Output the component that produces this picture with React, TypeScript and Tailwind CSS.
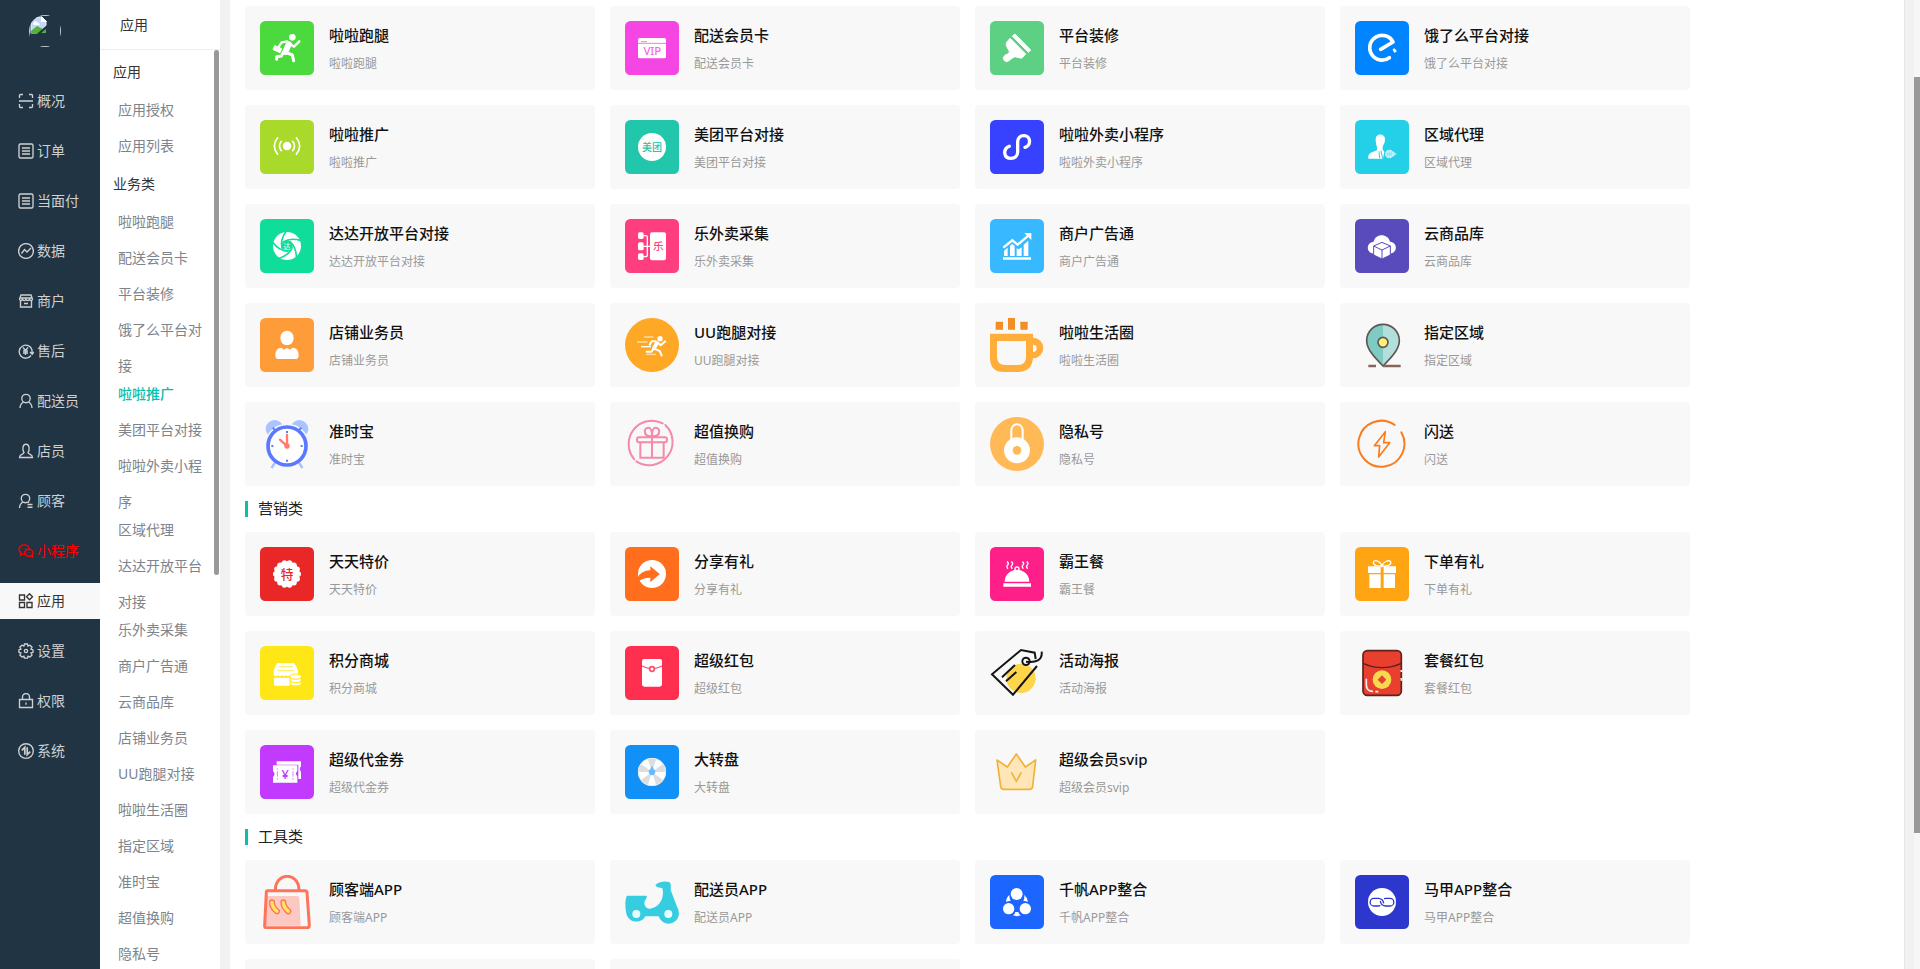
import React from 'react'

const navIcons: Record<string, React.ReactNode> = {
  scan: <path d="M1.500 5V2.500a1 1 0 0 1 1-1H5M11 1.500h2.500a1 1 0 0 1 1 1V5M14.500 11v2.500a1 1 0 0 1-1 1H11M5 14.500H2.500a1 1 0 0 1-1-1V11M1 8h14" />,
  list: <path d="M2.500 1h11a1.500 1.500 0 0 1 1.500 1.500v11a1.500 1.500 0 0 1-1.500 1.500h-11A1.500 1.500 0 0 1 1 13.500v-11A1.500 1.500 0 0 1 2.500 1ZM4 5h8M4 8h8M4 11h8" />,
  trend: <><circle cx="8" cy="8" r="7.400" /><path d="M3.500 10.500 6.500 6.500 9 9l4-4" /></>,
  shop: <path d="M3 2h10l1.500 4c0 2-2.500 2-3 .3C11 8 8.500 8 8 6.300 7.500 8 5 8 4.500 6.300 4 8 1.500 8 1.500 6L3 2ZM2.500 8v6h11V8M6 10.500h4M2 5h12" />,
  refund: <><path d="M13 12.500A6.500 6.500 0 1 1 14 7v4M12 9l2.200 2.200L16 9" /><path d="M5 4.500 7.500 7.500l2.500-3M7.500 7.500V12M5 8h5M5 10h5" /></>,
  rider: <><circle cx="8" cy="5.500" r="4.200" /><path d="M2 15c.2-3 1.600-5 3.600-6M14 15c-.2-3-1.600-5-3.600-6" /></>,
  clerk: <path d="M6 9.500C4.500 8 4 1.200 8 1.200S11.500 8 10 9.500c0 2 4.500 1.500 4.500 5h-13c0-3.500 4.500-3 4.500-5Z" />,
  customer: <><circle cx="7.500" cy="5.500" r="4.200" /><path d="M1.500 15c.2-3 1.500-5 3.500-6M10 9l1 .6M9.500 11.500h5M9.500 14.200h5" /></>,
  wechat: <><path d="M8.500 11.200c-1 .3-2.600.2-3.500-.2l-2.500 1.200.5-2.200C-.8 6.800 1.500 1.800 6 1.800c3 0 5 2 5 4.200" /><ellipse cx="10.800" cy="9.800" rx="4.200" ry="3.600" /><path d="m12.500 13 2 1-.3-2M4.200 5v.5M7.700 5v.5M9.500 9v.5M12.200 9v.5" /></>,
  apps: <path d="M1.500 2h5v5h-5zM1.500 9.500h5v5h-5zM9 9.500h5v5H9zM11.500.8l3 3-3 3-3-3z" />,
  gear: <><path d="M6.500 1h3l.5 2 2-.8 2 2-1 1.900 2 .8v2.400l-2 .7 1 2-2 2-2-.9-.6 2H6.500l-.6-2-2 .9-2-2 1-2-2-.7V6.900l2-.8-1-1.900 2-2 2 .8z" /><circle cx="8" cy="8" r="1.600" /></>,
  lock: <path d="M1.500 6.500h13v8h-13zM4.500 6.500V4a3.500 3.500 0 0 1 7 0v2.500M8 9.500v2.200" />,
  system: <><circle cx="8" cy="8" r="7.300" /><path d="M3.800 7.300 6.800 4.300v7.500M9.200 4.200v7.500l3-3" strokeWidth="1.700" /></>,
}

const navItems = [
  { icon: 'scan', label: '概况' },
  { icon: 'list', label: '订单' },
  { icon: 'list', label: '当面付' },
  { icon: 'trend', label: '数据' },
  { icon: 'shop', label: '商户' },
  { icon: 'refund', label: '售后' },
  { icon: 'rider', label: '配送员' },
  { icon: 'clerk', label: '店员' },
  { icon: 'customer', label: '顾客' },
  { icon: 'wechat', label: '小程序', className: 'text-[#ff0000]' },
  { icon: 'apps', label: '应用', className: 'bg-[#f8f8f8] text-[#333]' },
  { icon: 'gear', label: '设置' },
  { icon: 'lock', label: '权限' },
  { icon: 'system', label: '系统' },
]

const menuGroups = [
  { title: '应用', items: ['应用授权', '应用列表'] },
  {
    title: '业务类',
    items: [
      '啦啦跑腿', '配送会员卡', '平台装修', '饿了么平台对接', '啦啦推广', '美团平台对接', '啦啦外卖小程序',
      '区域代理', '达达开放平台对接', '乐外卖采集', '商户广告通', '云商品库', '店铺业务员', 'UU跑腿对接',
      '啦啦生活圈', '指定区域', '准时宝', '超值换购', '隐私号',
    ],
  },
]

const IconText = ({ x, y, size, fill, children }: { x: number; y: number; size: number; fill: string; children: string }) => (
  <text x={x} y={y} fontSize={size} fill={fill} textAnchor="middle" fontWeight="500">{children}</text>
)

const angles = (n: number) => Array.from({ length: n }, (_, i) => (i * 2 * Math.PI) / n)

// every drawing uses a 162 x 162 box, bg is the rounded tile behind it
const appIcons: Record<string, { bg?: string; art: React.ReactNode }> = {
  run: {
    bg: '#4cd93d',
    art: (
      <g stroke="#fff" fill="none" strokeLinecap="round" strokeLinejoin="round">
        <circle cx="97" cy="49" r="10" fill="#fff" stroke="none" />
        <path d="m86 70-10 23" strokeWidth="18" />
        <path d="m90 69 12 8 16-16M82 61l-17 3-10 15" strokeWidth="7" />
        <path d="m78 94 19 8 4 17M70 94l-6 11-14 2v8" strokeWidth="9" />
        <path d="m45 74 20 9-5 12-20-9z" fill="#fff" strokeWidth="3" />
      </g>
    ),
  },
  vip: {
    bg: '#f545e2',
    art: (
      <>
        <rect x="39" y="51" width="84" height="61" rx="5" fill="#fff" />
        <path d="M39 67h84M48 62h18" stroke="#f57ae9" strokeWidth="3" />
        <IconText x={82} y={102} size={34} fill="#f56ae8">VIP</IconText>
      </>
    ),
  },
  brush: {
    bg: '#5dd083',
    art: (
      <g fill="#fff" stroke="#fff" strokeWidth="3" strokeLinejoin="round">
        <path d="m67 45 8-6 47 48-7 7z" />
        <path d="m60 52 47 47-12 13-20-5q-10 3-16 11-10 8-17 0-6-9 4-16 14-3 12-11L49 74v-9z" />
      </g>
    ),
  },
  eleme: {
    bg: '#0084ff',
    art: (
      <g stroke="#fff" strokeWidth="11" fill="none" strokeLinecap="round" strokeLinejoin="round">
        <path d="m77 85 37-22A37 37 0 1 0 103 110" />
        <path d="m117 85-1 1 3 6 3-2z" strokeWidth="6" fill="#fff" />
      </g>
    ),
  },
  signal: {
    bg: '#a9d92b',
    art: (
      <g stroke="#fff" strokeWidth="5" fill="none">
        <circle cx="81" cy="78" r="13" fill="#fff" stroke="none" />
        <path d="M65 62q-13 16 0 32M54 52q-22 26 0 52M97 62q13 16 0 32M108 52q22 26 0 52" />
      </g>
    ),
  },
  meituan: {
    bg: '#22c6aa',
    art: (
      <>
        <circle cx="81" cy="81" r="42" fill="#fff" />
        <IconText x={81} y={92} size={30} fill="#22c6aa">美团</IconText>
      </>
    ),
  },
  mini: {
    bg: '#3642ff',
    art: <path d="M105 82c20-7 17-35-3-35-12 0-19 8-19 19v30c0 12-9 19-20 19-22 0-26-27-5-36" fill="none" stroke="#fff" strokeWidth="10" strokeLinecap="round" />,
  },
  agent: {
    bg: '#24cfe8',
    art: (
      <g fill="#fff">
        <path d="M62 57c0-18 28-18 28 0 0 13-5 18-7 23v9l5 6-4 21H40c-1-15 4-17 26-25v-9c-2-7-4-14-4-25Z" />
        <path d="m78 92 5 24M72 94l2 20" stroke="#24cfe8" strokeWidth="3" />
        <circle cx="103" cy="102" r="13" fillOpacity=".75" />
        <path d="m113 93 12 9-12 9z" fillOpacity=".6" />
        <path d="M90 102h26M103 90v25M95 94q8 7 0 16M111 94q-8 7 0 16" stroke="#24cfe8" strokeWidth="1" fill="none" />
      </g>
    ),
  },
  dada: {
    bg: '#11dd9b',
    art: (
      <>
        <circle cx="81" cy="81" r="42" fill="#fff" />
        {[0, 72, 144, 216, 288].map((deg) => (
          <path key={deg} d="M70 69q22-14 53-4" transform={`rotate(${deg} 81 81)`} fill="none" stroke="#11dd9b" strokeWidth="5" />
        ))}
        <circle cx="81" cy="81" r="17" fill="#11dd9b" />
        <IconText x={81} y={89} size={21} fill="#dffaf0">达</IconText>
      </>
    ),
  },
  collect: {
    bg: '#ff3e7f',
    art: (
      <>
        <g fill="#fff">
          <rect x="75" y="40" width="48" height="84" rx="6" />
          <rect x="39" y="40" width="17" height="20" rx="5" />
          <rect x="39" y="70" width="17" height="24" rx="5" />
          <rect x="39" y="103" width="17" height="20" rx="5" />
        </g>
        <path d="M56 50h7q4 0 4 5v52q0 6-5 6h-6M56 82h20" fill="none" stroke="#fff" strokeWidth="4" />
        <IconText x={100} y={93} size={32} fill="#ff3e7f">乐</IconText>
      </>
    ),
  },
  chart: {
    bg: '#38b9ff',
    art: (
      <g fill="#fff">
        <path d="M39 115h84v7H39zM42 95l11-9v25H42zM60 80l7-5 7 6v30H60zM80 88l6 3 9-6v26H80zM101 77l14-12v46h-14zM103 42h21v21z" />
        <path d="m40 86 27-22 16 13 32-27" fill="none" stroke="#fff" strokeWidth="7" />
      </g>
    ),
  },
  cloud: {
    bg: '#5a4bbd',
    art: (
      <>
        <path d="M60 104c-28 0-28-34-4-36 4-26 44-26 49 0 24 2 24 36-3 36z" fill="#fff" />
        <path d="m81 70 25 11v27l-25 12-25-12V81zM56 81l25 12 25-12M81 93v27" fill="#fff" stroke="#5a4bbd" strokeWidth="3" />
      </>
    ),
  },
  staff: {
    bg: '#ff9c3a',
    art: (
      <g fill="#fff">
        <ellipse cx="81" cy="60" rx="20" ry="22" />
        <path d="M46 112q0-23 19-23l6 6 10-5 10 5 6-6q19 0 19 23 0 11-8 11H54q-8 0-8-11Z" />
      </g>
    ),
  },
  uu: {
    art: (
      <>
        <circle cx="81" cy="81" r="81" fill="#ffa826" />
        <path d="M57 57h28M36 72h31M63 109h30" stroke="#ffdca6" strokeWidth="4" />
        <path d="M48 86h30" stroke="#fff" strokeWidth="4" />
        <g stroke="#fff" fill="none" strokeLinecap="round" strokeLinejoin="round" strokeWidth="6">
          <circle cx="105" cy="62" r="8" fill="#fff" stroke="none" />
          <path d="m95 76-8 15" strokeWidth="12" />
          <path d="m97 73 10 9 14-12M92 70H80l-6 10M87 92l17 7 6 14M86 92l-7 9H65" />
        </g>
      </>
    ),
  },
  cup: {
    art: (
      <>
        <path d="M17 11h22v24H17zM54 0h21v35H54zM91 11h22v24H91z" fill="#f28f24" />
        <path d="M0 47h129v12a31 31 0 0 1 0 62q-4 41-45 41H42Q0 162 0 120Z" fill="#ffae3b" />
        <path d="M21 69h87v47q0 25-24 25H46q-25 0-25-25ZM129 80a11 11 0 0 1 0 22z" fill="#f8f8f8" />
      </>
    ),
  },
  pin: {
    art: (
      <>
        <path d="M84 144C60 120 35 94 35 68a49 49 0 0 1 98 0c0 26-25 52-49 76" fill="#b2dfdb" />
        <path d="M84 144C60 120 35 94 35 68a49 49 0 0 1 49-49z" fill="#7ecbc4" />
        <path d="M84 144C60 120 35 94 35 68a49 49 0 0 1 98 0c0 26-25 52-49 76Z" fill="none" stroke="#5f5652" strokeWidth="5" />
        <circle cx="84" cy="73" r="15" fill="#fff176" stroke="#5f5652" strokeWidth="5" />
        <path d="M40 144h23M84 144h53" stroke="#846758" strokeWidth="7" />
      </>
    ),
  },
  clock: {
    art: (
      <>
        <path d="m46 135-11 18M116 135l11 18" stroke="#a9c4ff" strokeWidth="7" />
        <circle cx="44" cy="36" r="27" fill="#a9c4ff" />
        <circle cx="118" cy="36" r="27" fill="#a9c4ff" />
        <circle cx="81" cy="87" r="67" fill="#f8f8f8" />
        <path d="m46 135-11 18M116 135l11 18" stroke="#a9c4ff" strokeWidth="7" />
        <circle cx="81" cy="87" r="57" fill="#fff" stroke="#5b78ff" strokeWidth="11" />
        <path d="M81 42v6M81 128v6M34 87h6M122 87h6M38 32l8 8M124 32l-8 8" stroke="#5b78ff" strokeWidth="6" />
        <path d="M81 54v33L60 68" fill="none" stroke="#ff7a70" strokeWidth="7" strokeLinecap="round" />
        <circle cx="81" cy="87" r="8" fill="#ff7a70" />
      </>
    ),
  },
  swap: {
    art: (
      <g fill="none" stroke="#f48aaa" strokeWidth="6">
        <path d="M121 24A70 70 0 0 1 34 133M28 127A70 70 0 0 1 113 19" strokeLinecap="round" />
        <rect x="36" y="61" width="90" height="15" rx="6" />
        <path d="M46 77v45h70V77M81 58v64" />
        <path d="M81 58c-28 2-26-28-10-26 9 1 10 14 10 26 0-12 1-25 10-26 16-2 18 28-10 26Z" />
      </g>
    ),
  },
  privacy: {
    art: (
      <>
        <circle cx="81" cy="81" r="81" fill="#ffb957" />
        <path d="M64 72V40a17 18 0 0 1 34 0v32" fill="none" stroke="#fff" strokeWidth="6" />
        <circle cx="81" cy="100" r="39" fill="#fff" />
        <circle cx="81" cy="100" r="13" fill="#ffb957" />
      </>
    ),
  },
  flash: {
    art: (
      <g fill="none" stroke="#fb7b1f" strokeWidth="6" strokeLinecap="round" strokeLinejoin="round">
        <path d="M119 24A69 69 0 1 0 139 46" />
        <path d="M91 44 58 86h16l-3 34 33-43H86z" strokeWidth="5" />
      </g>
    ),
  },
  special: {
    bg: '#e92727',
    art: (
      <>
        <g fill="#fff">
          <circle cx="81" cy="81" r="38" />
          {angles(14).map((a) => (
            <circle key={a} cx={81 + 34 * Math.cos(a)} cy={81 + 34 * Math.sin(a)} r="8" />
          ))}
        </g>
        <IconText x={81} y={95} size={38} fill="#e92727">特</IconText>
      </>
    ),
  },
  share: {
    bg: '#ff6d1d',
    art: (
      <>
        <circle cx="81" cy="81" r="42" fill="#fff" />
        <path d="M37 94q10-23 39-24V58l28 23-28 25V92q-21-1-35 11z" fill="#ff6d1d" />
      </>
    ),
  },
  dish: {
    bg: '#ff1f88',
    art: (
      <>
        <path d="M44 104a37 36 0 0 1 74 0zM40 109h83v10H40z" fill="#fff" />
        <circle cx="81" cy="66" r="6" fill="none" stroke="#fff" strokeWidth="4" />
        <path d="M51 44q7 5 2 10t1 11M64 44q7 5 2 10t1 11M97 44q7 5 2 10t1 11M110 44q7 5 2 10t1 11" fill="none" stroke="#fff" strokeWidth="4" />
      </>
    ),
  },
  gift: {
    bg: '#ffa413',
    art: (
      <>
        <path d="M39 58h38v20H39zM86 58h37v20H86zM43 82h34v41H43zM86 82h34v41H86z" fill="#fff" />
        <path d="M81 57c-34 2-30-21-14-15 8 3 12 9 14 15 2-6 7-12 14-15 18-5 20 17-14 15Z" fill="none" stroke="#fff" strokeWidth="4" />
      </>
    ),
  },
  mall: {
    bg: '#ffe617',
    art: (
      <>
        <path d="M52 51h50q7 8 12 23v14q-6 6-12 0-6 6-12 0-6 6-12 0-6 6-12 0-6 6-12 0-6 6-13 0V74q4-15 11-23ZM42 95h47v24H46q-4 0-4-4z" fill="#fff" />
        <path d="M57 62h41M52 74h50" stroke="#ffef70" strokeWidth="4" />
        <g fill="#fff" stroke="#ffe617" strokeWidth="3">
          <ellipse cx="107" cy="112" rx="17" ry="8" />
          <ellipse cx="107" cy="102" rx="17" ry="8" />
          <ellipse cx="107" cy="92" rx="17" ry="8" />
        </g>
      </>
    ),
  },
  packet: {
    bg: '#ff304f',
    art: (
      <>
        <rect x="51" y="39" width="60" height="83" rx="7" fill="#fff" />
        <path d="M51 60q30 16 60 0" fill="none" stroke="#ff304f" strokeWidth="3" />
        <circle cx="81" cy="69" r="7" fill="#fff" stroke="#ff4d68" strokeWidth="5" />
      </>
    ),
  },
  poster: {
    art: (
      <>
        <circle cx="93" cy="97" r="44" fill="#ffd54a" />
        <g fill="none" stroke="#151515" strokeWidth="6">
          <path d="M137 39 134 20 93 12 6 85l63 61 72-86" />
          <circle cx="108" cy="46" r="11" />
          <path d="M108 47c30 4 50-4 47-30M36 94l39-37M48 106l31-28" />
        </g>
      </>
    ),
  },
  combo: {
    art: (
      <>
        <rect x="24" y="14" width="115" height="134" rx="13" fill="#e93f2e" stroke="#5e211c" strokeWidth="5" />
        <path d="M24 52q57 26 115 0" fill="none" stroke="#5e211c" strokeWidth="4" />
        <circle cx="81" cy="101" r="28" fill="#f5d94e" />
        <path d="m81 88 13 13-13 13-13-13z" fill="#e93f2e" />
        <path d="M34 98v18q0 20 20 20M61 137h9M139 72v6M139 96v8" fill="none" stroke="#f6f0ef" strokeWidth="5" />
      </>
    ),
  },
  coupon: {
    bg: '#c33aff',
    art: (
      <>
        <path d="M50 49h73v15q-7 8 0 16v22h-8V59H50z" fill="#fff" />
        <path d="M39 61h73v17q-8 8 0 16v19H39V96q9-9 0-18z" fill="#fff" />
        <path d="M52 70v4M52 79v16M52 99v5M99 70v4M99 79v16M99 99v5" stroke="#d984ff" strokeWidth="3" />
        <IconText x={75} y={101} size={38} fill="#c33aff">¥</IconText>
      </>
    ),
  },
  wheel: {
    bg: '#1190f8',
    art: (
      <>
        <circle cx="81" cy="81" r="42" fill="#fff" />
        {[0, 72, 144, 216, 288].map((deg) => (
          <path key={deg} d="M81 81 68 41a42 42 0 0 1 26 0z" transform={`rotate(${deg} 81 81)`} fill="#dbdde0" />
        ))}
        <circle cx="81" cy="81" r="41" fill="none" stroke="#e8eaec" strokeWidth="3" />
        <path d="m81 62 5 10a10 10 0 1 1-10 0z" fill="#66bbff" />
      </>
    ),
  },
  crown: {
    art: (
      <>
        <path d="m21 45 31 21 27-39 27 39 31-21-9 79q-1 9-10 9H42q-9 0-10-9z" fill="#ffe6b8" stroke="#f1b337" strokeWidth="5" strokeLinejoin="round" />
        <path d="m64 82 15 27 15-27" fill="none" stroke="#f1b337" strokeWidth="5" />
      </>
    ),
  },
  bag: {
    art: (
      <>
        <path d="M21 63h90q7 0 7 7l4 82H16z" fill="#fcc8c2" />
        <path d="M22 47h113q5 0 6 5l7 99q0 7-6 7H19q-6 0-5-7l5-99q0-5 3-5ZM46 46c0-56 71-56 71 0" fill="none" stroke="#ff735a" strokeWidth="9" />
        <path d="M36 82c0 14 8 22 15 27M70 82c0 14 9 22 15 27" fill="none" stroke="#ff735a" strokeWidth="18" strokeLinecap="round" />
        <path d="M36 82c0 14 8 22 15 27M70 82c0 14 9 22 15 27" fill="none" stroke="#ffe65a" strokeWidth="10" strokeLinecap="round" />
      </>
    ),
  },
  scooter: {
    art: (
      <>
        <path d="M6 62h57q5 0 1 8-9 12-4 22 5 10 16 9c30-4 43-35 36-62-10-1-18-2-21-9 13-11 30-12 41-9q7 2 5 24l18 47q9 14 6 30a31 31 0 0 1-60 2H61a31 31 0 0 1-55-2C1 110-2 74 6 62Z" fill="#36cde0" />
        <circle cx="34" cy="117" r="12" fill="#e9feff" />
        <circle cx="130" cy="117" r="12" fill="#e9feff" />
      </>
    ),
  },
  qianfan: {
    bg: '#1c66ff',
    art: (
      <g fill="#fff">
        <circle cx="80" cy="57" r="18" />
        <circle cx="56" cy="101" r="17" />
        <circle cx="106" cy="101" r="17" />
        <path d="M59 59q-10 8-11 21l14-3q-5-9-3-18ZM102 59q10 8 12 21l-14-3q5-9 2-18ZM69 121q6-3 7-10h9q1 8 8 10-12 5-24 0Z" />
      </g>
    ),
  },
  majia: {
    bg: '#2d37ce',
    art: (
      <>
        <circle cx="81" cy="81" r="42" fill="#fff" />
        <g fill="none" stroke="#2d37ce" strokeWidth="4">
          <path d="M76 91q-3 2-7 2H57a11 11 0 0 1 0-23h14q14 2 15 15" />
          <path d="M87 71q3-1 7-1h11a11 11 0 0 1 0 23H91q-14-2-15-15" />
        </g>
      </>
    ),
  },
}

const business = [
  ['run', '啦啦跑腿'], ['vip', '配送会员卡'], ['brush', '平台装修'], ['eleme', '饿了么平台对接'],
  ['signal', '啦啦推广'], ['meituan', '美团平台对接'], ['mini', '啦啦外卖小程序'], ['agent', '区域代理'],
  ['dada', '达达开放平台对接'], ['collect', '乐外卖采集'], ['chart', '商户广告通'], ['cloud', '云商品库'],
  ['staff', '店铺业务员'], ['uu', 'UU跑腿对接'], ['cup', '啦啦生活圈'], ['pin', '指定区域'],
  ['clock', '准时宝'], ['swap', '超值换购'], ['privacy', '隐私号'], ['flash', '闪送'],
]

const marketing = [
  ['special', '天天特价'], ['share', '分享有礼'], ['dish', '霸王餐'], ['gift', '下单有礼'],
  ['mall', '积分商城'], ['packet', '超级红包'], ['poster', '活动海报'], ['combo', '套餐红包'],
  ['coupon', '超级代金券'], ['wheel', '大转盘'], ['crown', '超级会员svip'],
]

const tools = [
  ['bag', '顾客端APP'], ['scooter', '配送员APP'], ['qianfan', '千帆APP整合'], ['majia', '马甲APP整合'],
]

const AppCard = ({ icon, name }: { icon: string; name: string }) => {
  const { bg, art } = appIcons[icon]
  return (
    <a href="#" className="w-[350px] h-[84px] px-[15px] flex items-center gap-[15px] rounded bg-[#f8f8f8]">
      <svg viewBox="0 0 162 162" className="size-[54px] shrink-0" aria-hidden="true">
        {bg && <rect width="162" height="162" rx="16" fill={bg} />}
        {art}
      </svg>
      <div className="pt-[3px]">
        <h3 className="text-[15px] leading-7 font-medium text-[#111]">{name}</h3>
        <p className="mt-px text-xs leading-7 text-[#999]">{name}</p>
      </div>
    </a>
  )
}

const SectionTitle = ({ children }: { children: string }) => (
  <h2 className="my-[15px] h-4 border-l-3 border-[#06bfad] pl-2.5 text-[15px] leading-[14px] text-[#222]">{children}</h2>
)

const CardGrid = ({ apps, children }: { apps: string[][]; children?: React.ReactNode }) => (
  <div className="flex flex-wrap gap-[15px]">
    {apps.map(([icon, name]) => (
      <AppCard key={name} icon={icon} name={name} />
    ))}
    {children}
  </div>
)

const Sidebar = () => (
  <nav className="w-[100px] shrink-0 bg-[#203443]">
    <svg viewBox="0 0 32 32" className="mt-[15px] ml-[29px] size-8" role="img" aria-label="avatar">
      <clipPath id="avatar">
        <circle cx="16" cy="16" r="16" />
      </clipPath>
      <g clipPath="url(#avatar)">
        <rect x=".5" y=".5" width="31" height="31" fill="none" stroke="#c4c9cd" />
        <path d="M2 2h11l4 4v6L8 18H2z" fill="#c3d8f8" stroke="#eef3f8" />
        <path d="M2 18v-2l6-5 6 3-4 4z" fill="#53b13c" />
        <path d="M4 9c0-3 4-4 5-1 2 0 2 2 1 2H5z" fill="#fff" />
        <path d="M12 1v6h6" fill="#fff" />
        <path d="m9 18 9-8v8z" fill="#203443" />
        <path d="M12 18h5v-4z" fill="#53b13c" />
      </g>
    </svg>
    <ul className="mt-9 flex flex-col gap-3.5">
      {navItems.map(({ icon, label, className }) => (
        <li key={label}>
          <a href="#" className={`h-9 pl-[18px] flex items-center gap-[3px] text-sm ${className ?? 'text-[#cfd0d2]'}`}>
            <svg viewBox="0 0 16 16" className="size-4" fill="none" stroke="currentColor" strokeWidth="1.350" aria-hidden="true">
              {navIcons[icon]}
            </svg>
            {label}
          </a>
        </li>
      ))}
    </ul>
  </nav>
)

const SubMenu = () => (
  <aside className="w-[120px] shrink-0 flex flex-col bg-white text-sm">
    <h1 className="h-[50px] shrink-0 border-b border-[#eee] pl-5 leading-[50px] text-[#333]">应用</h1>
    <div className="relative min-h-0 flex-1 overflow-hidden pt-0.5">
      {menuGroups.map(({ title, items }) => (
        <section key={title}>
          <h2 className="pl-[13px] leading-10 text-[#333]">{title}</h2>
          <ul className="pl-[18px] pr-3 leading-9">
            {items.map((item) => (
              <li key={item} className={item.length > 6 && !item.startsWith('UU') ? '-mb-2' : ''}>
                <a href="#" className={item === '啦啦推广' ? 'text-[#06bfad] font-medium' : 'text-[#7d848c]'}>{item}</a>
              </li>
            ))}
          </ul>
        </section>
      ))}
      <div className="absolute top-0 right-px h-[525px] w-[5px] rounded-full bg-[#999]" />
    </div>
  </aside>
)

const App = () => {
  return (
    <div className="flex h-screen overflow-hidden bg-[#f1f1f1] font-['Noto_Sans','Noto_Sans_CJK_SC',sans-serif]">
      <Sidebar />
      <SubMenu />
      <main className="mr-[9px] flex-1 overflow-hidden border-l-[10px] border-r border-l-[#f1f1f1] border-r-[#e6e6e6] bg-white px-[15px] pt-1.5">
        <CardGrid apps={business} />
        <SectionTitle>营销类</SectionTitle>
        <CardGrid apps={marketing} />
        <SectionTitle>工具类</SectionTitle>
        <CardGrid apps={tools}>
          <div className="h-[84px] w-[350px] rounded bg-[#f8f8f8]" />
          <div className="h-[84px] w-[350px] rounded bg-[#f8f8f8]" />
        </CardGrid>
      </main>
      <div className="w-1.5 bg-[#f6f6f6] pt-[77px]">
        <div className="h-[756px] bg-[#999]" />
      </div>
    </div>
  )
}

export default App
